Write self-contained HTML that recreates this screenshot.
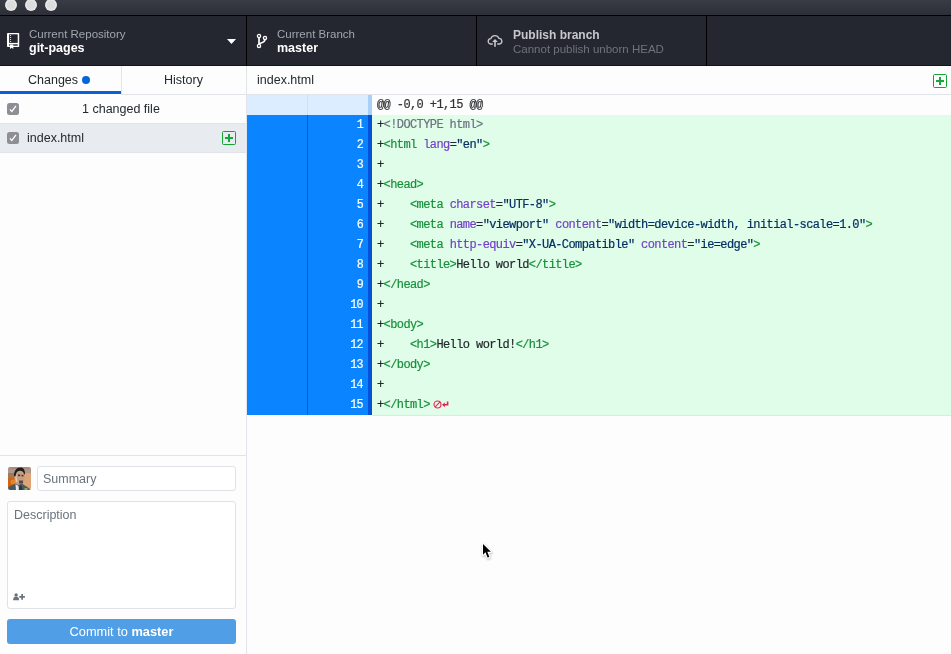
<!DOCTYPE html>
<html><head><meta charset="utf-8">
<style>
*{box-sizing:border-box;margin:0;padding:0}
body{will-change:transform}
html,body{width:951px;height:654px;overflow:hidden;background:#fdfdfd;font-family:"Liberation Sans",sans-serif;position:relative}
.abs{position:absolute}
#title{left:0;top:0;width:951px;height:15px;background:linear-gradient(#393c45,#2c2f37)}
#title .tl{position:absolute;top:-1px;width:12px;height:12px;border-radius:50%;background:radial-gradient(circle,#dcdcdc 0,#dcdcdc 3.5px,#e5e7ea 5px)}
#tline{left:0;top:15px;width:951px;height:1px;background:#000}
#toolbar{left:0;top:16px;width:951px;height:49px;background:#24272f}
#tbot{left:0;top:65px;width:951px;height:1px;background:#121518}
.vdiv{position:absolute;top:16px;width:1px;height:50px;background:#000}
.lbl{position:absolute;font-size:11.5px;color:#a0a6ae;white-space:pre;line-height:14px}
.val{position:absolute;font-size:12.5px;color:#fff;font-weight:bold;white-space:pre;line-height:14px}
#sideborder{left:246px;top:66px;width:1px;height:588px;background:#e1e4e8}
.txt{position:absolute;white-space:pre;color:#24292e;font-size:12.5px;line-height:14px}
.hline{position:absolute;height:1px;background:#e1e4e8}
.cb{position:absolute;width:12px;height:12px;border-radius:2.5px;background:#8e8f94}
.cb svg{position:absolute;left:0;top:0}
.gplus{position:absolute;width:14px;height:14px;border:1px solid #12a535;border-radius:1.5px}
.gplus:before{content:"";position:absolute;left:2px;top:5px;width:8px;height:2px;background:#14a83b}
.gplus:after{content:"";position:absolute;left:5px;top:2px;width:2px;height:8px;background:#14a83b}
#diff{left:247px;top:95px;width:704px}
.row{position:relative;height:20px;width:704px}
.g1{position:absolute;left:0;top:0;width:60px;height:20px}
.g2{position:absolute;left:60px;top:0;width:61px;height:20px}
.bar{position:absolute;left:121px;top:0;width:4px;height:20px}
.code{position:absolute;left:125px;top:0;right:0;height:20px;padding-left:5px;font-family:"Liberation Mono",monospace;font-size:12px;letter-spacing:-0.6px;line-height:20px;white-space:pre;color:#24292e}
.sel .g1{background:#0a84ff}
.sel .g2{background:#0a84ff;border-left:1px solid #0b5ccc}
.sel .bar{background:#0652d6}
.sel .code{background:#e0fde9}
.num{position:absolute;right:5.5px;top:0;line-height:20px;color:#fff;font-family:"Liberation Mono",monospace;font-size:13px;letter-spacing:-1px;transform:scaleX(0.9);transform-origin:right center}
.hunk .g1,.hunk .g2{background:#dbedff}
.hunk .g2{border-left:1px solid #c8e1fb}
.hunk .bar{background:#a9d0f8}
.code,.num{-webkit-text-stroke:0.2px currentColor}
.t{color:#17903a}.a{color:#7540c8}.s{color:#032f62}.m{color:#6a737d}
</style></head><body>
<div id="title" class="abs">
  <div class="tl" style="left:5px"></div>
  <div class="tl" style="left:25px"></div>
  <div class="tl" style="left:45px"></div>
</div>
<div id="tline" class="abs"></div>
<div id="toolbar" class="abs"></div>
<div id="tbot" class="abs"></div>
<div class="vdiv" style="left:246px"></div>
<div class="vdiv" style="left:476px"></div>
<div class="vdiv" style="left:706px"></div>

<div class="lbl" style="left:29px;top:27px">Current Repository</div>
<div class="val" style="left:29px;top:41px">git-pages</div>
<div class="lbl" style="left:277px;top:27px">Current Branch</div>
<div class="val" style="left:277px;top:41px">master</div>
<div class="val" style="left:513px;top:28px;color:#c6c8cb;font-size:12px">Publish branch</div>
<div class="lbl" style="left:513px;top:42px;color:#6e747a">Cannot publish unborn HEAD</div>


<!-- icons -->
<svg class="abs" style="left:7px;top:33px" width="13" height="16" viewBox="0 0 13 16">
  <rect x="0" y="0" width="12.2" height="14" rx="0.8" fill="#fff"/>
  <rect x="2.1" y="1.3" width="8.6" height="8.6" fill="#24272f"/>
  <circle cx="3.6" cy="2.5" r="0.6" fill="#fff"/><circle cx="3.6" cy="4.5" r="0.6" fill="#fff"/>
  <circle cx="3.6" cy="6.5" r="0.6" fill="#fff"/><circle cx="3.6" cy="8.5" r="0.6" fill="#fff"/>
  <rect x="2.1" y="11.3" width="8.6" height="1.4" fill="#24272f"/>
  <path d="M3 11.6H6.3V16L4.65 14.8L3 16Z" fill="#fff"/>
</svg>
<svg class="abs" style="left:226px;top:38px" width="12" height="8" viewBox="0 0 12 8">
  <path d="M1 1H10L5.5 6Z" fill="#fff"/>
</svg>
<svg class="abs" style="left:252px;top:30px" width="20" height="20" viewBox="0 0 20 20">
  <g fill="none" stroke="#fff" stroke-width="1.3">
  <circle cx="7" cy="6" r="1.6"/><circle cx="13" cy="7.9" r="1.6"/><circle cx="7" cy="15.9" r="1.6"/>
  <path d="M7 7.6V14.3" stroke-width="1.7"/><path d="M13 9.5C13 12 10.5 12.6 7.3 13.6" stroke-width="1.6"/>
  </g>
</svg>
<svg class="abs" style="left:484px;top:31px" width="22" height="19" viewBox="0 0 22 19">
  <path d="M8.8 13H6.4A2.7 2.7 0 0 1 6.8 7.65A4.3 4.3 0 0 1 14.9 7.3A2.9 2.9 0 0 1 15.7 13H13.2" fill="none" stroke="#c6c8cb" stroke-width="1.3"/>
  <path d="M8.2 10.9L11 8L13.8 10.9Z" fill="#c6c8cb"/>
  <rect x="10.2" y="10" width="1.6" height="5.8" fill="#c6c8cb"/>
</svg>
<svg class="abs" style="left:474px;top:536px" width="26" height="26" viewBox="0 0 26 26">
  <defs><filter id="csh" x="-50%" y="-50%" width="200%" height="200%"><feGaussianBlur stdDeviation="0.8"/></filter></defs>
  <g transform="translate(9 8)">
  <path d="M0 0V10.7L2.5 8.3L4.5 13.6L6.4 12.9L4.3 7.7H7.9Z" fill="#000" stroke="#000" stroke-width="2.6" stroke-linejoin="round" opacity="0.25" filter="url(#csh)" transform="translate(0.3 1)"/>
  <path d="M0 0V10.7L2.5 8.3L4.5 13.6L6.4 12.9L4.3 7.7H7.9Z" fill="#fff" stroke="#fff" stroke-width="2.4" stroke-linejoin="round"/>
  <path d="M0 0V10.7L2.5 8.3L4.5 13.6L6.4 12.9L4.3 7.7H7.9Z" fill="#000"/>
  </g>
</svg>
<div id="sideborder" class="abs"></div>
<!-- tabs -->
<div class="txt" style="left:28px;top:73px">Changes</div>
<div class="abs" style="left:82px;top:76px;width:8px;height:8px;border-radius:50%;background:#0366d6"></div>
<div class="abs" style="left:0;top:91px;width:121px;height:3px;background:#0a5fd8"></div>
<div class="abs" style="left:121px;top:66px;width:1px;height:29px;background:#e1e4e8"></div>
<div class="hline" style="left:121px;top:94px;width:125px"></div>
<div class="txt" style="left:164px;top:73px">History</div>

<div class="cb" style="left:7px;top:103px"><svg width="12" height="12" viewBox="0 0 12 12"><path d="M2.9 6.4L4.85 8.5L9 2.9" fill="none" stroke="#fff" stroke-width="1.3"/></svg></div>
<div class="txt" style="left:82px;top:102px">1 changed file</div>
<div class="hline" style="left:0;top:123px;width:246px"></div>
<div class="abs" style="left:0;top:124px;width:246px;height:28px;background:#e8ebef"></div>
<div class="hline" style="left:0;top:152px;width:246px"></div>
<div class="cb" style="left:7px;top:132px"><svg width="12" height="12" viewBox="0 0 12 12"><path d="M2.9 6.4L4.85 8.5L9 2.9" fill="none" stroke="#fff" stroke-width="1.3"/></svg></div>
<div class="txt" style="left:27px;top:131px">index.html</div>
<div class="gplus" style="left:222px;top:131px"></div>

<!-- diff header -->
<div class="txt" style="left:257px;top:73px">index.html</div>
<div class="gplus" style="left:933px;top:74px"></div>
<div class="hline" style="left:247px;top:94px;width:704px"></div>

<div id="diff" class="abs">
<div class="row hunk"><div class="g1"></div><div class="g2"></div><div class="bar"></div><div class="code" style="color:#2f3337">@@ -0,0 +1,15 @@</div></div>
<div class="row sel"><div class="g1"></div><div class="g2"><span class="num">1</span></div><div class="bar"></div><div class="code">+<span class="m">&lt;!DOCTYPE html&gt;</span></div></div>
<div class="row sel"><div class="g1"></div><div class="g2"><span class="num">2</span></div><div class="bar"></div><div class="code">+<span class="t">&lt;html</span> <span class="a">lang</span>=<span class="s">"en"</span><span class="t">&gt;</span></div></div>
<div class="row sel"><div class="g1"></div><div class="g2"><span class="num">3</span></div><div class="bar"></div><div class="code">+</div></div>
<div class="row sel"><div class="g1"></div><div class="g2"><span class="num">4</span></div><div class="bar"></div><div class="code">+<span class="t">&lt;head&gt;</span></div></div>
<div class="row sel"><div class="g1"></div><div class="g2"><span class="num">5</span></div><div class="bar"></div><div class="code">+    <span class="t">&lt;meta</span> <span class="a">charset</span>=<span class="s">"UTF-8"</span><span class="t">&gt;</span></div></div>
<div class="row sel"><div class="g1"></div><div class="g2"><span class="num">6</span></div><div class="bar"></div><div class="code">+    <span class="t">&lt;meta</span> <span class="a">name</span>=<span class="s">"viewport"</span> <span class="a">content</span>=<span class="s">"width=device-width, initial-scale=1.0"</span><span class="t">&gt;</span></div></div>
<div class="row sel"><div class="g1"></div><div class="g2"><span class="num">7</span></div><div class="bar"></div><div class="code">+    <span class="t">&lt;meta</span> <span class="a">http-equiv</span>=<span class="s">"X-UA-Compatible"</span> <span class="a">content</span>=<span class="s">"ie=edge"</span><span class="t">&gt;</span></div></div>
<div class="row sel"><div class="g1"></div><div class="g2"><span class="num">8</span></div><div class="bar"></div><div class="code">+    <span class="t">&lt;title&gt;</span>Hello world<span class="t">&lt;/title&gt;</span></div></div>
<div class="row sel"><div class="g1"></div><div class="g2"><span class="num">9</span></div><div class="bar"></div><div class="code">+<span class="t">&lt;/head&gt;</span></div></div>
<div class="row sel"><div class="g1"></div><div class="g2"><span class="num">10</span></div><div class="bar"></div><div class="code">+</div></div>
<div class="row sel"><div class="g1"></div><div class="g2"><span class="num">11</span></div><div class="bar"></div><div class="code">+<span class="t">&lt;body&gt;</span></div></div>
<div class="row sel"><div class="g1"></div><div class="g2"><span class="num">12</span></div><div class="bar"></div><div class="code">+    <span class="t">&lt;h1&gt;</span>Hello world!<span class="t">&lt;/h1&gt;</span></div></div>
<div class="row sel"><div class="g1"></div><div class="g2"><span class="num">13</span></div><div class="bar"></div><div class="code">+<span class="t">&lt;/body&gt;</span></div></div>
<div class="row sel"><div class="g1"></div><div class="g2"><span class="num">14</span></div><div class="bar"></div><div class="code">+</div></div>
<div class="row sel"><div class="g1"></div><div class="g2"><span class="num">15</span></div><div class="bar"></div><div class="code">+<span class="t">&lt;/html&gt;</span><svg class="nonl" style="position:absolute;left:60.5px;top:4.8px" width="18" height="10" viewBox="0 0 18 10"><circle cx="4.5" cy="4.5" r="3.5" fill="none" stroke="#e0244f" stroke-width="1.1"/><line x1="2.2" y1="6.8" x2="6.8" y2="2.2" stroke="#e0244f" stroke-width="1.1"/><path d="M14.6 1.5V4.8H11" fill="none" stroke="#e0244f" stroke-width="1.6"/><path d="M9 4.8L11.8 2.4V7.2z" fill="#e0244f"/></svg></div></div>
</div>

<div class="hline" style="left:372px;top:415px;width:579px"></div>
<!-- commit -->
<div class="hline" style="left:0;top:455px;width:246px"></div>
<svg class="abs" style="left:8px;top:467px" width="23" height="23" viewBox="0 0 23 23">
  <defs><clipPath id="av"><rect width="23" height="23" rx="2"/></clipPath><filter id="bl" x="-10%" y="-10%" width="120%" height="120%"><feGaussianBlur stdDeviation="0.45"/></filter></defs>
  <g clip-path="url(#av)"><g filter="url(#bl)">
  <rect x="-1" y="-1" width="25" height="25" fill="#d9a070"/>
  <rect x="-1" y="-1" width="25" height="3" fill="#b08a78"/>
  <rect x="-1" y="2" width="25" height="2" fill="#a39a96"/>
  <rect x="-1" y="4" width="25" height="2" fill="#b49684"/>
  <rect x="-1" y="6" width="8" height="5" fill="#a5785a"/>
  <rect x="-1" y="11" width="8" height="13" fill="#cc6414"/>
  <circle cx="5" cy="15" r="2.5" fill="#e88420"/>
  <rect x="16" y="7" width="8" height="16" fill="#dea476"/>
  <path d="M6.5 8.5C6.5 3.5 9 1 12 1c3 0 5 2.5 5 6.5l-0.5 4.5c-0.5 4-2.5 6.5-5 6.5s-4.5-2.5-5-6z" fill="#c89e80"/>
  <path d="M7.5 7C8 10 8 13 9 15" stroke="#e0ccb8" stroke-width="1.5" fill="none"/>
  <path d="M6 9C6 3.5 8.5 0.5 12.5 0.5c2.5 0 4.5 2 4.5 6.5l-0.8 0.6C15.5 4.5 14 3.5 11.5 3.8 9 4 8 6 7.5 9.5z" fill="#1e1a1a"/>
  <rect x="10" y="7.5" width="2.2" height="1.6" fill="#4a3326"/><rect x="13.5" y="7.8" width="2" height="1.6" fill="#4a3326"/>
  <path d="M11 13.5h4v3h-4z" fill="#5a4a42"/>
  <path d="M-1 24L1 19.5c2-1 5-2 6.5-3l3 1.5 3-1.5c2 1 3 2 5 3l6 4.5z" fill="#4a5862"/>
  <path d="M7.5 17l3 2 0.5 5h-3z" fill="#e6eaee"/>
  <path d="M11.5 18.5h2l1 5.5h-3.5z" fill="#2c3440"/>
  <rect x="16.5" y="21" width="3" height="2" fill="#8ab040"/>
  </g></g>
</svg>
<div class="abs" style="left:37px;top:466px;width:199px;height:25px;border:1px solid #dfe2e6;border-radius:3px;background:#fff"></div>
<div class="txt" style="left:43px;top:472px;color:#6a737d;font-size:12.5px">Summary</div>
<div class="abs" style="left:7px;top:501px;width:229px;height:108px;border:1px solid #dfe2e6;border-radius:3px;background:#fff"></div>
<div class="txt" style="left:14px;top:508px;color:#6a737d;font-size:12.5px">Description</div>
<svg class="abs" style="left:13px;top:592.5px" width="13" height="8" viewBox="0 0 13 8">
  <circle cx="3.1" cy="1.9" r="1.7" fill="#6a737d"/>
  <path d="M0.1 7.3c0-2.6 1.2-3.7 3-3.7s3 1.1 3 3.7z" fill="#6a737d"/>
  <path d="M6.3 3.9h5.6M9.1 1.1v5.6" stroke="#6a737d" stroke-width="1.7"/>
</svg>
<div class="abs" style="left:7px;top:619px;width:229px;height:25px;border-radius:3px;background:#509ee6"></div>
<div class="txt" style="left:7px;top:625px;width:229px;text-align:center;color:#fff;font-size:12.8px">Commit to <b>master</b></div>
</body></html>
